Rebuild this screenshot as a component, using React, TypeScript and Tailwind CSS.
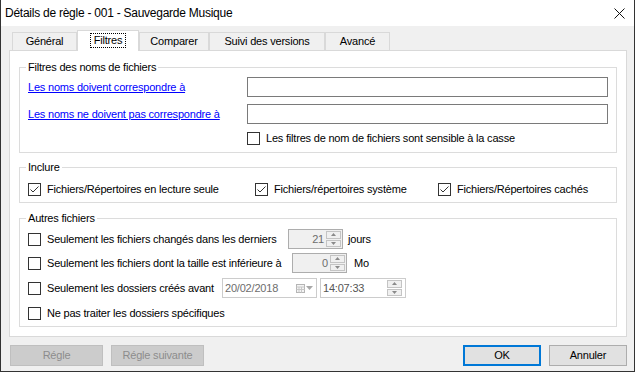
import React from "react"

const ui = "font-['Liberation_Sans',Arial,sans-serif] text-[11px] tracking-[-0.2px] leading-[13px] text-black"

function Check({ checked = false }: { checked?: boolean }) {
  return (
    <span className="flex h-[13px] w-[13px] shrink-0 items-center justify-center border border-[#333333] bg-white">
      {checked && (
        <svg width="11" height="11" viewBox="0 0 11 11">
          <path d="M1.5 5.5 L4 8 L9.5 2.5" fill="none" stroke="#333333" strokeWidth="1" />
        </svg>
      )}
    </span>
  )
}

function CheckLabel({ checked, label, className = "" }: { checked?: boolean; label: string; className?: string }) {
  return (
    <div className={`flex h-[16px] items-center gap-[6px] ${className}`}>
      <Check checked={checked} />
      <span>{label}</span>
    </div>
  )
}

function SpinButtons() {
  return (
    <div className="flex h-full w-[15px] flex-col gap-px py-[1px]">
      {[0, 1].map((i) => (
        <div key={i} className="flex flex-1 items-center justify-center border border-[#c4c4c4] bg-[#f0f0f0]">
          <svg width="5" height="3" viewBox="0 0 5 3">
            <path d={i === 0 ? "M0 3 L2.5 0 L5 3 Z" : "M0 0 L2.5 3 L5 0 Z"} fill="#8a8a8a" />
          </svg>
        </div>
      ))}
    </div>
  )
}

function Spin({ value, width }: { value: string; width: string }) {
  return (
    <div className={`flex h-[20px] ${width} items-center border border-[#adadad] bg-[#f0f0f0] pr-[1px]`}>
      <span className="flex-1 pr-[2px] text-right text-[#6d6d6d]">{value}</span>
      <SpinButtons />
    </div>
  )
}

function Tab({ label, width, active = false }: { label: string; width: string; active?: boolean }) {
  if (active) {
    return (
      <div className={`relative z-10 -mb-px flex h-[21px] ${width} items-start justify-center border border-b-0 border-[#d9d9d9] bg-white pt-[2px]`}>
        <span className="border border-dotted border-black px-[3px] leading-[13px]">{label}</span>
      </div>
    )
  }
  return (
    <div className={`flex h-[18px] ${width} items-center justify-center border border-b-0 border-[#d9d9d9] bg-[#f0f0f0]`}>
      {label}
    </div>
  )
}

export default function App() {
  return (
    <div className={`flex h-[372px] w-[635px] flex-col overflow-hidden border-x border-b border-[#333333] bg-[#f0f0f0] ${ui}`}>
      {/* barre de titre */}
      <div className="flex h-[26px] shrink-0 items-center justify-between bg-white pl-[4px] pr-[9px]">
        <span className="text-[12px] tracking-[-0.25px]">Détails de règle - 001 - Sauvegarde Musique</span>
        <svg width="11" height="11" viewBox="0 0 11 11">
          <path d="M0.5 0.5 L10.5 10.5 M10.5 0.5 L0.5 10.5" stroke="#111111" strokeWidth="1" />
        </svg>
      </div>

      {/* onglets */}
      <div className="flex h-[24px] items-end pl-[11px]">
        <Tab label="Général" width="w-[65px]" />
        <Tab label="Filtres" width="w-[62px]" active />
        <Tab label="Comparer" width="w-[70px]" />
        <Tab label="Suivi des versions" width="w-[116px]" />
        <Tab label="Avancé" width="w-[65px]" />
      </div>

      <div className="ml-[8px] flex h-[287px] w-[618px] flex-col border border-[#d9d9d9] bg-white px-[9px] pt-[10px]">
        <fieldset className="border border-[#dcdcdc] px-[8px] pb-[6px]">
          <legend className="-ml-[2px] px-[2px]">Filtres des noms de fichiers</legend>
          <div className="mt-[3px] flex h-[20px] items-center">
            <a className="w-[219px] text-[#0000ff] underline">Les noms doivent correspondre à </a>
            <div className="h-[20px] w-[361px] border border-[#7a7a7a] bg-white" />
          </div>
          <div className="mt-[7px] flex h-[20px] items-center">
            <a className="w-[219px] text-[#0000ff] underline">Les noms ne doivent pas correspondre à </a>
            <div className="h-[20px] w-[361px] border border-[#7a7a7a] bg-white" />
          </div>
          <CheckLabel className="mt-[6px] pl-[219px]" label="Les filtres de nom de fichiers sont sensible à la casse" />
        </fieldset>

        <fieldset className="mt-[8px] border border-[#dcdcdc] px-[8px] pb-[5px]">
          <legend className="-ml-[2px] px-[2px]">Inclure</legend>
          <div className="mt-[7px] flex">
            <CheckLabel className="w-[227px]" checked label="Fichiers/Répertoires en lecture seule" />
            <CheckLabel className="w-[183px]" checked label="Fichiers/répertoires système" />
            <CheckLabel checked label="Fichiers/Répertoires cachés" />
          </div>
        </fieldset>

        <fieldset className="mt-[9px] border border-[#dcdcdc] px-[8px] pb-[5px]">
          <legend className="-ml-[2px] px-[2px]">Autres fichiers</legend>
          <div className="mt-[4px] flex h-[20px] items-center">
            <CheckLabel className="w-[260px]" label="Seulement les fichiers changés dans les derniers" />
            <Spin value="21" width="w-[55px]" />
            <span className="ml-[5px]">jours</span>
          </div>
          <div className="mt-[4px] flex h-[20px] items-center">
            <CheckLabel className="w-[264px]" label="Seulement les fichiers dont la taille est inférieure à" />
            <Spin value="0" width="w-[55px]" />
            <span className="ml-[7px]">Mo</span>
          </div>
          <div className="mt-[5px] flex h-[20px] items-center">
            <CheckLabel className="w-[194px]" label="Seulement les dossiers créés avant" />
            <div className="flex h-[20px] w-[95px] items-center border border-[#cccccc] bg-white pl-[2px] pr-[3px] text-[#6d6d6d]">
              <span className="flex-1">20/02/2018</span>
              <svg width="9" height="9" viewBox="0 0 9 9" className="mr-[1px]">
                <rect x="0.5" y="0.5" width="8" height="8" fill="#f4f4f4" stroke="#b5b5b5" />
                <path d="M0.5 3 H8.5 M0.5 5.5 H8.5 M3 3 V8.5 M5.5 3 V8.5" stroke="#c8c8c8" strokeWidth="1" />
              </svg>
              <svg width="7" height="4" viewBox="0 0 7 4">
                <path d="M0 0 L3.5 4 L7 0 Z" fill="#a8a8a8" />
              </svg>
            </div>
            <div className="ml-[3px] flex h-[20px] w-[86px] items-center border border-[#cccccc] bg-white pl-[2px] pr-[3px] text-[#555555]">
              <span className="flex-1">14:07:33</span>
              <SpinButtons />
            </div>
          </div>
          <CheckLabel className="mt-[7px]" label="Ne pas traiter les dossiers spécifiques" />
        </fieldset>
      </div>

      {/* boutons */}
      <div className="mt-[8px] flex items-center justify-between pl-[9px] pr-[7px]">
        <div className="flex gap-[8px]">
          <button className="h-[21px] w-[93px] border border-[#bfbfbf] bg-[#cccccc] text-[#8c8c8c]">Régle</button>
          <button className="h-[21px] w-[93px] border border-[#bfbfbf] bg-[#cccccc] text-[#8c8c8c]">Régle suivante</button>
        </div>
        <div className="flex gap-[8px]">
          <button className="h-[21px] w-[78px] border-2 border-[#0078d7] bg-[#e1e1e1]">OK</button>
          <button className="h-[21px] w-[78px] border border-[#adadad] bg-[#e1e1e1]">Annuler</button>
        </div>
      </div>
    </div>
  )
}
